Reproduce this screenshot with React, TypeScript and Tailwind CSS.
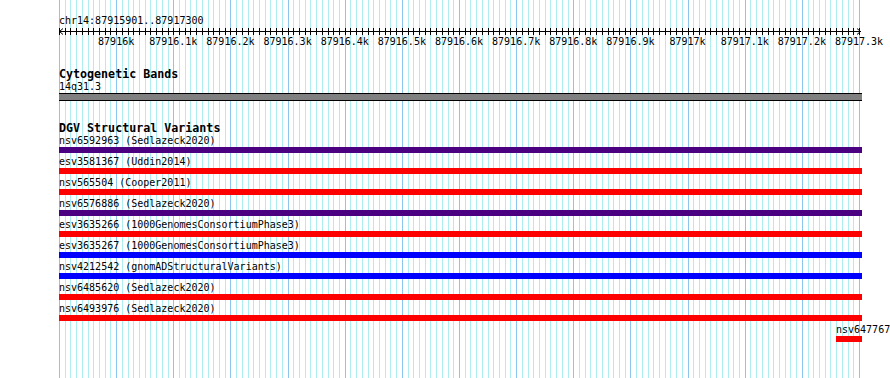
const START = 87915900
const END = 87917300
const LEFT = 59
const PX = 800 / (END - START)

const xOf = (bp: number) => LEFT + (bp - START) * PX

const variants = [
  { label: 'nsv6592963 (Sedlazeck2020)', color: 'bg-[#4b0082]' },
  { label: 'esv3581367 (Uddin2014)', color: 'bg-[#ff0000]' },
  { label: 'nsv565504 (Cooper2011)', color: 'bg-[#ff0000]' },
  { label: 'nsv6576886 (Sedlazeck2020)', color: 'bg-[#4b0082]' },
  { label: 'esv3635266 (1000GenomesConsortiumPhase3)', color: 'bg-[#ff0000]' },
  { label: 'esv3635267 (1000GenomesConsortiumPhase3)', color: 'bg-[#0000ff]' },
  { label: 'nsv4212542 (gnomADStructuralVariants)', color: 'bg-[#0000ff]' },
  { label: 'nsv6485620 (Sedlazeck2020)', color: 'bg-[#ff0000]' },
  { label: 'nsv6493976 (Sedlazeck2020)', color: 'bg-[#ff0000]' },
]

function GridLines() {
  const lines = Array.from({ length: 141 }, (_, i) => i)
  return (
    <svg className="pointer-events-none absolute inset-0" width={890} height={378} shapeRendering="crispEdges">
      {lines.map((i) => {
        const x = Math.round(xOf(START + i * 10)) + 0.5
        return (
          <line
            key={i}
            x1={x}
            x2={x}
            y1={0}
            y2={378}
            stroke={i % 10 === 0 ? '#8cc6ee' : '#aeeef0'}
            strokeWidth={1}
          />
        )
      })}
    </svg>
  )
}

function Ruler() {
  const ticks = Array.from({ length: 141 }, (_, i) => i)
  const labels = Array.from({ length: 14 }, (_, i) => START + (i + 1) * 100)
  const right = xOf(END) - LEFT + 2
  return (
    <svg width={831} height={21} className="block">
      <g shapeRendering="crispEdges" stroke="#000">
        <line x1={0} x2={right} y1={5.5} y2={5.5} />
        {ticks.map((i) => {
          const x = Math.round(xOf(START + i * 10) - LEFT) + 0.5
          return <line key={i} x1={x} x2={x} y1={2} y2={9} />
        })}
      </g>
      <g stroke="#000" fill="none" strokeWidth={1}>
        <polyline points={`4,2.5 0.5,5.5 4,8.5`} />
        <polyline points={`${right - 4},2.5 ${right - 0.5},5.5 ${right - 4},8.5`} />
      </g>
      {labels.map((bp) => {
        const txt = (bp / 1000).toString() + 'k'
        return (
          <text
            key={bp}
            x={xOf(bp) - LEFT}
            y={18.5}
            textAnchor="middle"
            fontFamily="'DejaVu Sans Mono', monospace"
            fontSize={10}
            fill="#000"
          >
            {txt}
          </text>
        )
      })}
    </svg>
  )
}

export default function App() {
  return (
    <div className="relative h-[378px] w-[890px] overflow-hidden bg-white">
      <GridLines />
      <div className="relative pl-[59px] font-['DejaVu_Sans_Mono',monospace] text-black">
        <div className="pt-[16px] text-[10px] leading-[10px]">chr14:87915901..87917300</div>
        <Ruler />

        <div className="mt-[21px] text-[11.67px] font-bold leading-[12px]">Cytogenetic Bands</div>
        <div className="mt-[2px] text-[10px] leading-[10px]">14q31.3</div>
        <div className="mt-[1px] h-[8px] w-[803px] border-y border-black bg-[#808080]" />

        <div className="mt-[21px] text-[11.67px] font-bold leading-[12px]">DGV Structural Variants</div>
        <div className="mt-[2px] flex flex-col gap-[4px]">
          {variants.map((v) => (
            <div key={v.label} className="flex flex-col gap-[1px]">
              <div className="whitespace-nowrap text-[10px] leading-[10px]">{v.label}</div>
              <div className={`h-[6px] w-[803px] ${v.color}`} />
            </div>
          ))}
          <div className="flex flex-col gap-[1px] pl-[777px]">
            <div className="whitespace-nowrap text-[10px] leading-[10px]">nsv647767</div>
            <div className="h-[6px] w-[26px] bg-[#ff0000]" />
          </div>
        </div>
      </div>
    </div>
  )
}
